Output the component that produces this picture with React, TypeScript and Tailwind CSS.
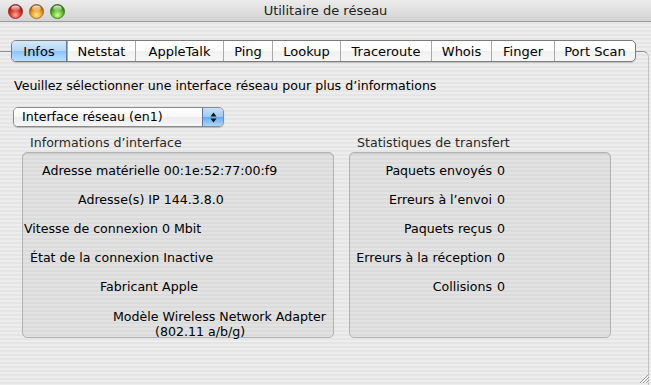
import React from 'react';

const tabs = [
    { label: 'Infos', w: 'w-[55px]', active: true },
    { label: 'Netstat', w: 'w-[68px]' },
    { label: 'AppleTalk', w: 'w-[88px]' },
    { label: 'Ping', w: 'w-[49px]' },
    { label: 'Lookup', w: 'w-[68px]' },
    { label: 'Traceroute', w: 'w-[91px]' },
    { label: 'Whois', w: 'w-[60px]' },
    { label: 'Finger', w: 'w-[63px]' },
    { label: 'Port Scan', w: 'w-[81px]' },
];

// left box: each row sits at its own offset, like the original window
const infoRows = [
    { label: 'Adresse matérielle', value: '00:1e:52:77:00:f9', pad: 'pl-[19px]' },
    { label: 'Adresse(s) IP', value: '144.3.8.0', pad: 'pl-[55px]' },
    { label: 'Vitesse de connexion', value: '0 Mbit', pad: 'pl-[1px]' },
    { label: 'État de la connexion', value: 'Inactive', pad: 'pl-[7px]' },
    { label: 'Fabricant', value: 'Apple', pad: 'pl-[77px]' },
];

const statRows = [
    { label: 'Paquets envoyés', value: '0' },
    { label: 'Erreurs à l’envoi', value: '0' },
    { label: 'Paquets reçus', value: '0' },
    { label: 'Erreurs à la réception', value: '0' },
    { label: 'Collisions', value: '0' },
];

function Light({ from, mid, to }: { from: string; mid: string; to: string }) {
    const id = from.replace('#', 'g');
    return (
        <svg width="15" height="15" viewBox="0 0 15 15">
            <defs>
                <radialGradient id={id} cx="50%" cy="75%" r="65%">
                    <stop offset="0%" stopColor={from} />
                    <stop offset="55%" stopColor={mid} />
                    <stop offset="100%" stopColor={to} />
                </radialGradient>
                <linearGradient id={id + 'h'} x1="0" y1="0" x2="0" y2="1">
                    <stop offset="0%" stopColor="#fff" stopOpacity="0.9" />
                    <stop offset="100%" stopColor="#fff" stopOpacity="0.1" />
                </linearGradient>
            </defs>
            <circle cx="7.5" cy="7.5" r="7" fill={`url(#${id})`} stroke={to} strokeWidth="0.8" />
            <ellipse cx="7.5" cy="4.2" rx="4.3" ry="2.8" fill={`url(#${id}h)`} />
        </svg>
    );
}

export default function App() {
    return (
        <div className="relative w-[651px] h-[385px] overflow-hidden flex flex-col font-['Lucida_Grande','DejaVu_Sans',sans-serif] text-[12.6px] text-black bg-[repeating-linear-gradient(to_bottom,#ededed_0px,#ededed_2px,#e5e5e5_2px,#e5e5e5_4px)]">
            {/* Title bar */}
            <div className="relative h-[22px] shrink-0 flex items-center border-b border-[#9c9c9c] bg-[linear-gradient(to_bottom,#ececec,#d3d3d3)]">
                <div className="flex items-center gap-[6px] pl-[8px] pt-[1px]">
                    <Light from="#ffb3a6" mid="#e0392b" to="#8f1d14" />
                    <Light from="#ffe7a0" mid="#f2a128" to="#9a5a0c" />
                    <Light from="#d8f9a8" mid="#65c22b" to="#2f6d10" />
                </div>
                <div className="absolute inset-0 flex items-center justify-center text-[13px] text-[#222]">
                    Utilitaire de réseau
                </div>
            </div>

            {/* Tab view */}
            <div className="mt-[29px] w-[649px] flex-1 border-t border-r border-t-[#8e8e8e] border-r-[#c4c4c4] rounded-tr-[6px]">
                <div className="ml-[11px] -mt-[12px] flex h-[22px] w-fit rounded-[5px] border border-[#7b7b7b] overflow-hidden shadow-[0_1px_1px_rgba(0,0,0,0.15)] bg-[linear-gradient(to_bottom,#ffffff,#fdfdfd_50%,#f1f1f1_51%,#f7f7f7)]">
                    {tabs.map((t, i) => (
                        <div
                            key={t.label}
                            className={
                                t.w +
                                ' flex items-center justify-center text-[13px] leading-none ' +
                                (i > 0 ? 'border-l border-[#a9a9a9] ' : '') +
                                (t.active
                                    ? 'bg-[linear-gradient(to_bottom,#d4e8fc,#b3d6fa_50%,#8ec3f5_51%,#b9e0fe)] border-r border-r-[#5e7fa8]'
                                    : '')
                            }
                        >
                            {t.label}
                        </div>
                    ))}
                </div>

                <div className="ml-[14px] mt-[16px] leading-[16px]">
                    Veuillez sélectionner une interface réseau pour plus d’informations
                </div>

                {/* Popup button */}
                <div className="ml-[13px] mt-[13px] w-[211px] h-[20px] flex rounded-[5px] border border-[#8a8a8a] overflow-hidden shadow-[0_1px_1px_rgba(0,0,0,0.2)]">
                    <div className="flex-1 flex items-center pl-[8px] bg-[linear-gradient(to_bottom,#ffffff,#f8f8f8_50%,#ececec_51%,#f6f6f6)]">
                        Interface réseau (en1)
                    </div>
                    <div className="w-[21px] flex items-center justify-center border-l border-[#5977a6] bg-[linear-gradient(to_bottom,#c7dff9,#9ec9f4_50%,#6aa9ea_51%,#a8d7fd)]">
                        <svg width="9" height="13" viewBox="0 0 9 13">
                            <path d="M4.5 1.5 L7.5 5.5 L1.5 5.5 Z" fill="#111" />
                            <path d="M4.5 11.5 L7.5 7.5 L1.5 7.5 Z" fill="#111" />
                        </svg>
                    </div>
                </div>

                {/* Groups */}
                <div className="flex mt-[9px]">
                    <div className="ml-[22px] w-[312px]">
                        <div className="pl-[8px] h-[14px] leading-[14px] text-[#2a2a2a]">Informations d’interface</div>
                        <div className="mt-[2px] h-[186px] rounded-[5px] border border-[#b3b3b3] bg-black/[0.045] shadow-[inset_0_1px_1px_rgba(0,0,0,0.1)] pt-[4px]">
                            {infoRows.map((r) => (
                                <div key={r.label} className={r.pad + ' h-[29px] flex items-center whitespace-nowrap'}>
                                    {r.label} {r.value}
                                </div>
                            ))}
                            <div className="pl-[90px] pt-[7px] leading-[15px] whitespace-nowrap">
                                <div>Modèle Wireless Network Adapter</div>
                                <div className="pl-[42px]">(802.11 a/b/g)</div>
                            </div>
                        </div>
                    </div>

                    <div className="ml-[15px] w-[262px]">
                        <div className="pl-[8px] h-[14px] leading-[14px] text-[#2a2a2a]">Statistiques de transfert</div>
                        <div className="mt-[2px] h-[186px] rounded-[5px] border border-[#b3b3b3] bg-black/[0.045] shadow-[inset_0_1px_1px_rgba(0,0,0,0.1)] pt-[4px]">
                            {statRows.map((r) => (
                                <div key={r.label} className="h-[29px] flex items-center whitespace-nowrap">
                                    <span className="w-[142px] text-right">{r.label}</span>
                                    <span className="ml-[5px]">{r.value}</span>
                                </div>
                            ))}
                        </div>
                    </div>
                </div>
            </div>

            {/* Resize grip */}
            <svg className="absolute right-[1px] bottom-[1px]" width="11" height="11" viewBox="0 0 11 11">
                <path d="M10 1 L1 10 M10 4 L4 10 M10 7 L7 10" stroke="#9a9a9a" strokeWidth="1" />
                <path d="M10.5 2 L2 10.5 M10.5 5 L5 10.5 M10.5 8 L8 10.5" stroke="#fff" strokeWidth="0.8" />
            </svg>
        </div>
    );
}
